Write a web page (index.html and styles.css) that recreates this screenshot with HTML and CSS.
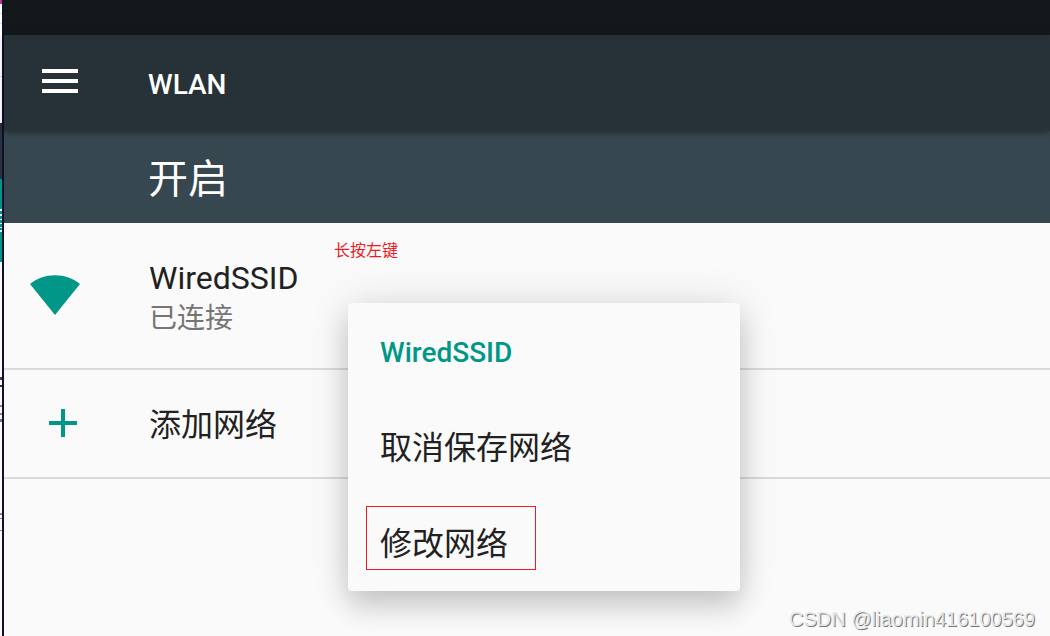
FILE: index.html
```html
<!DOCTYPE html>
<html lang="zh-CN">
<head>
<meta charset="utf-8">
<title>WLAN</title>
<link rel="stylesheet" href="styles.css">
</head>
<body>
<div class="desktop">
  <div class="backdrop" aria-hidden="true"></div>
  <div class="screen">
    <div class="status-bar"></div>
    <header class="app-bar">
      <button class="menu-button" type="button" aria-label="菜单">
        <svg width="36" height="24" viewBox="0 0 36 24" fill="#fff" shape-rendering="crispEdges"><path d="M0 0h36v4H0zM0 10h36v4H0zM0 20h36v4H0z"/></svg>
      </button>
      <h1 class="app-title">WLAN</h1>
    </header>
    <div class="switch-bar">开启</div>
    <main class="networks">
      <button class="network network-connected" type="button">
        <span class="network-icon">
          <svg width="50" height="40" viewBox="0 0 50 40" fill="#009688"><path d="M0 9C7 3.500 15.500.300 25 .300S43 3.500 50 9L25 40z"/></svg>
        </span>
        <span class="network-text">
          <span class="network-name">WiredSSID</span>
          <span class="network-state">已连接</span>
        </span>
      </button>
      <button class="network network-add" type="button">
        <span class="network-icon add-icon">
          <svg width="28" height="28" viewBox="0 0 28 28" fill="#009688" shape-rendering="crispEdges"><path d="M12 0h4v12h12v4H16v12h-4V16H0v-4h12z"/></svg>
        </span>
        <span class="network-label network-name">添加网络</span>
      </button>
    </main>
  </div>
  <p class="note">长按左键</p>
  <div class="context-menu">
    <h2 class="context-title">WiredSSID</h2>
    <button class="context-item" type="button">取消保存网络</button>
    <button class="context-item" type="button">修改网络</button>
    <span class="highlight"></span>
  </div>
  <p class="watermark">CSDN @liaomin416100569</p>
</div>
</body>
</html>
```
FILE: styles.css
```css
* {
  box-sizing: border-box;
}

body {
  margin: 0;
  font-family: Roboto, "Noto Sans CJK SC", sans-serif;
  color: #212121;
  background: #fafafa;
}

h1, h2, p {
  margin: 0;
}

button {
  padding: 0;
  border: 0;
  background: none;
  color: inherit;
  font: inherit;
  text-align: left;
}

svg {
  display: block;
}

.desktop {
  position: relative;
  display: flex;
  min-height: 100vh;
  overflow: hidden;
}

.backdrop {
  width: 2px;
  background: linear-gradient(#b8358c 0 4px, #fff 4px 13px, #ddd 13px 14px, #fff 14px 23px, #ddd 23px 24px, #fff 24px 76px, #ddd 76px 77px, #fff 77px 123px, #2a3438 123px 179px, #009688 179px 209px, #fff 209px 211px, #009688 211px 214px, #fff 214px 216px, #009688 216px 219px, #fff 219px 220px, #009688 220px 223px, #fff 223px 224px, #009688 224px 227px, #fff 227px 228px, #009688 228px 230px, #fff 230px 232px, #009688 232px 262px, #fafafa 262px 377px, #444 377px 380px, #fafafa 380px 385px, #333 385px 387px, #fafafa 387px 405px, #888 405px 407px, #fafafa 407px 413px, #888 413px 415px, #fafafa 415px 419px, #777 419px 422px, #fafafa 422px 513px, #888 513px 515px, #fafafa 515px 518px, #888 518px 519px, #fafafa 519px 530px, #888 530px 531px, #fafafa 531px);
}

.screen {
  flex: 1;
  border-left: 2px solid #0d1030;
}

.status-bar {
  height: 35px;
  background: #13181b;
}

.app-bar {
  position: relative;
  display: flex;
  align-items: center;
  height: 96px;
  background: #263238;
  box-shadow: 0 2px 6px rgba(0, 0, 0, 0.35);
}

.menu-button {
  width: 144px;
  padding: 0 0 4px 38px;
}

.app-title {
  padding-top: 4px;
  color: #fff;
  font-size: 28px;
  font-weight: 500;
  line-height: 32px;
}

.switch-bar {
  padding: 19px 0 13px 144px;
  background: #37474f;
  color: #fff;
  font-size: 40px;
  line-height: 60px;
}

.network {
  display: flex;
  width: 100%;
  border-bottom: 2px solid #dadada;
}

.network-icon {
  width: 144px;
  padding-left: 26px;
  padding-bottom: 2px;
}

.network-connected {
  align-items: center;
  height: 147px;
}

.network-text {
  padding-top: 6px;
  padding-left: 1px;
}

.network-label {
  padding-top: 2px;
  padding-left: 1px;
}

.network-name {
  display: block;
  font-size: 32px;
  line-height: 40px;
}

.network-state {
  display: block;
  color: #757575;
  font-size: 28px;
  line-height: 42px;
}

.network-add {
  align-items: center;
  height: 109px;
}

.add-icon {
  padding-left: 45px;
}

.note {
  position: absolute;
  top: 239px;
  left: 334px;
  color: #ed1c24;
  font-size: 16px;
  line-height: 24px;
}

.context-menu {
  position: absolute;
  top: 303px;
  left: 348px;
  width: 392px;
  border-radius: 4px;
  background: #fafafa;
  box-shadow: 0 16px 28px rgba(0, 0, 0, 0.16), 0 0 40px rgba(0, 0, 0, 0.12);
}

.context-title {
  height: 96px;
  padding: 0 32px;
  color: #009688;
  font-size: 28px;
  font-weight: 500;
  line-height: 100px;
}

.context-item {
  display: block;
  width: 100%;
  height: 96px;
  padding: 0 32px 4px;
  font-size: 32px;
}

.highlight {
  position: absolute;
  top: 203px;
  left: 18px;
  width: 170px;
  height: 64px;
  border: 1px solid #ed1c24;
  pointer-events: none;
}

.watermark {
  position: absolute;
  right: 15px;
  bottom: 5px;
  color: #e8e8e8;
  font-family: "Liberation Sans", Arial, sans-serif;
  font-size: 20px;
  line-height: 24px;
  text-shadow: 1px 1px 0 #777;
}
```
